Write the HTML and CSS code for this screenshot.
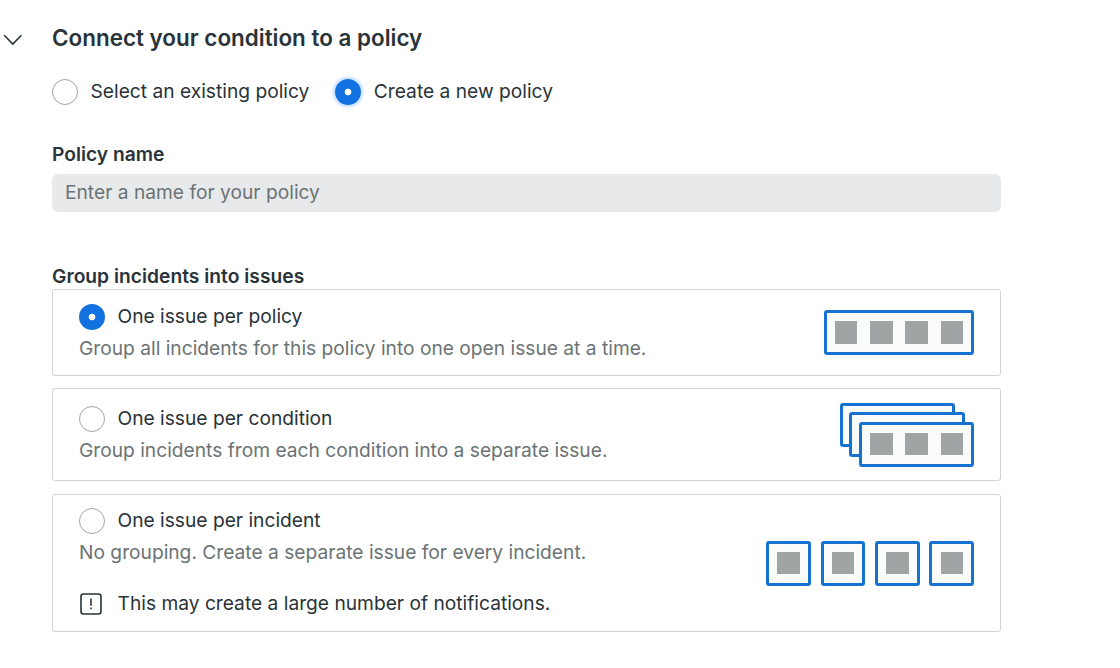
FILE: index.html
```html
<!DOCTYPE html>
<html lang="en">
<head>
<meta charset="utf-8">
<title>Connect your condition to a policy</title>
<link rel="stylesheet" href="styles.css">
</head>
<body>
<main class="section">
  <svg class="chevron" width="20" height="14" viewBox="0 0 20 14"><path d="M1.2 2.2 L9.8 11 L18.4 2.2"/></svg>
  <div class="content">
    <h1 class="title">Connect your condition to a policy</h1>
    <div class="modes">
      <div class="option"><span class="radio"></span><span class="label">Select an existing policy</span></div>
      <div class="option"><span class="radio checked focused"></span><span class="label">Create a new policy</span></div>
    </div>
    <label class="heading name-heading" for="policy-name">Policy name</label>
    <input class="field" id="policy-name" type="text" placeholder="Enter a name for your policy">
    <h2 class="heading group-heading">Group incidents into issues</h2>
    <div class="cards">
      <section class="card card-policy">
        <div class="text">
          <div class="option"><span class="radio checked"></span><span class="label">One issue per policy</span></div>
          <p class="description">Group all incidents for this policy into one open issue at a time.</p>
        </div>
        <svg class="diagram" width="150" height="45" viewBox="0 0 150 45">
          <rect class="frame" x="1.5" y="1.5" width="147" height="42" rx="1.5"/>
          <path class="block" d="M11 11h22v23h-22zM46 11h23v23h-23zM81 11h23v23h-23zM117 11h22v23h-22z"/>
        </svg>
      </section>
      <section class="card card-condition">
        <div class="text">
          <div class="option"><span class="radio"></span><span class="label">One issue per condition</span></div>
          <p class="description">Group incidents from each condition into a separate issue.</p>
        </div>
        <svg class="diagram" width="134" height="64" viewBox="0 0 134 64">
          <rect class="frame" x="1.5" y="1.5" width="112" height="41" rx="1.5"/>
          <rect class="frame" x="10.5" y="10.5" width="113" height="42" rx="1.5"/>
          <rect class="frame" x="20.5" y="20.5" width="112" height="42" rx="1.5"/>
          <path class="block" d="M30 30h23v22h-23zM65 30h23v22h-23zM101 30h22v22h-22z"/>
        </svg>
      </section>
      <section class="card card-incident">
        <div class="text">
          <div class="option"><span class="radio"></span><span class="label">One issue per incident</span></div>
          <p class="description">No grouping. Create a separate issue for every incident.</p>
          <div class="notice">
            <svg class="alert" width="22" height="22" viewBox="0 0 22 22"><rect x="1" y="1" width="20" height="20" rx="2.5"/><path d="M11 5.5v7.2M11 14.6v1.7"/></svg>
            <span class="label">This may create a large number of notifications.</span>
          </div>
        </div>
        <svg class="diagram" width="208" height="45" viewBox="0 0 208 45">
          <rect class="frame" x="1.5" y="1.5" width="42" height="42" rx="1.5"/>
          <rect class="frame" x="56.5" y="1.5" width="41" height="42" rx="1.5"/>
          <rect class="frame" x="110.5" y="1.5" width="42" height="42" rx="1.5"/>
          <rect class="frame" x="164.5" y="1.5" width="42" height="42" rx="1.5"/>
          <path class="block" d="M11 11h23v22h-23zM66 11h22v22h-22zM120 11h23v22h-23zM175 11h22v22h-22z"/>
        </svg>
      </section>
    </div>
  </div>
</main>
</body>
</html>
```
FILE: styles.css
```css
* { box-sizing: border-box; }
body {
  margin: 0;
  background: #fff;
  color: #293338;
  font-family: Inter, "Liberation Sans", sans-serif;
  font-size: 19.2px;
  line-height: 26px;
}
.section { display: flex; padding: 23px 0 0 3px; }
.chevron { flex: none; margin: 10px 29px 0 0; }
.chevron path { fill: none; stroke: #293338; stroke-width: 1.6; }
.content { width: 949px; }
.title { margin: 0; font-size: 22.45px; line-height: 30px; font-weight: 600; }
.modes { display: flex; gap: 26px; margin-top: 26px; }
.option { display: flex; align-items: center; gap: 12.5px; height: 26px; white-space: nowrap; }
.radio { flex: none; width: 26px; height: 26px; border: 1px solid #9fa5a5; border-radius: 50%; background: #fff; }
.checked { border: 0; background: radial-gradient(circle, #fff 3px, #1273e0 3.7px); }
.focused { box-shadow: 0 0 4px 1px #9ccbff; }
.label { padding-bottom: 2px; }
.heading { display: block; margin: 0; font-size: 19.2px; line-height: 26px; font-weight: 600; }
.name-heading { margin-top: 36px; }
.field {
  display: block; width: 100%; height: 38px; margin-top: 7px; padding: 0 13px 2px;
  border: 0; border-radius: 6px; background: #e7e9ea; font: inherit;
}
.field::placeholder { color: #6b7374; opacity: 1; }
.group-heading { margin-top: 51px; letter-spacing: 0.03px; }
.cards { display: flex; flex-direction: column; }
.card { display: flex; justify-content: space-between; padding: 0 26px; border: 1px solid #d0d3d3; border-radius: 3px; }
.card-policy { height: 87px; padding-top: 14px; }
.card-condition { height: 93px; margin-top: 12px; padding-top: 17px; }
.card-incident { height: 138px; margin-top: 13px; padding-top: 13px; }
.description { margin: 5px 0 0; color: #6b7374; white-space: nowrap; }
.notice { display: flex; align-items: center; gap: 15.5px; height: 26px; margin: 26px 0 0 1px; white-space: nowrap; }
.alert { fill: none; stroke: #293338; stroke-width: 1.6; }
.diagram { flex: none; }
.card-policy .diagram { margin-top: 6px; }
.card-condition .diagram { margin-top: -3px; }
.card-incident .diagram { margin-top: 33px; }
.frame { fill: #fafbfb; stroke: #1672d0; stroke-width: 3; }
.block { fill: #9fa5a4; }
```
